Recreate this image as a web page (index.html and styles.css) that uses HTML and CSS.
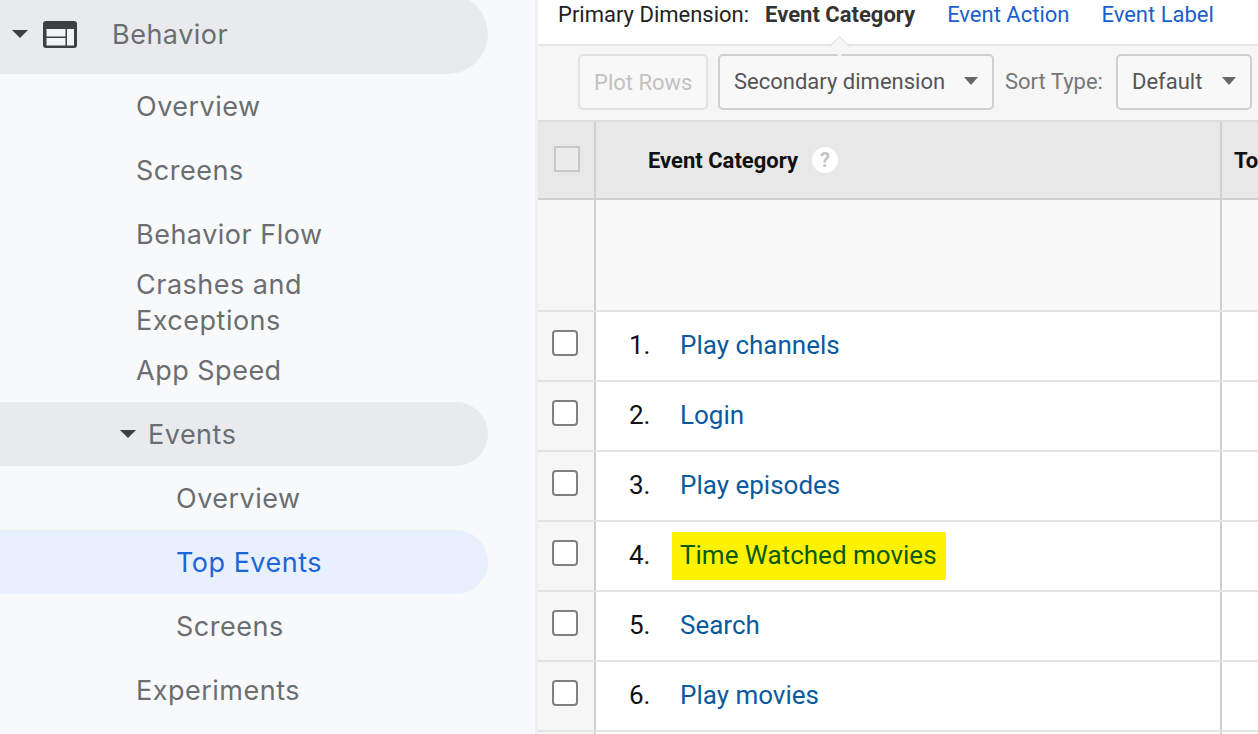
FILE: index.html
```html
<!DOCTYPE html>
<html lang="en">
<head>
    <meta charset="UTF-8">
    <meta name="viewport" content="width=device-width, initial-scale=1.0">
    <title>Top Events</title>
    <link rel="stylesheet" href="styles.css">
</head>
<body>
    <div class="page">
        <nav class="sidebar">
            <div class="nav-item nav-head">
                <span class="caret"></span>
                <svg class="nav-icon" width="34" height="27" viewBox="0 0 34 27">
                    <rect width="34" height="27" rx="3" fill="#3c4043"/>
                    <rect x="3.500" y="8" width="19" height="7.500" fill="#f1f3f4"/>
                    <rect x="3.500" y="17" width="19" height="7.500" fill="#f1f3f4"/>
                    <rect x="24" y="8" width="7" height="16.500" fill="#f1f3f4"/>
                </svg>
                <span>Behavior</span>
            </div>
            <div class="nav-item level-1">Overview</div>
            <div class="nav-item level-1">Screens</div>
            <div class="nav-item level-1">Behavior Flow</div>
            <div class="nav-item level-1 two-line">Crashes and<br>Exceptions</div>
            <div class="nav-item level-1">App Speed</div>
            <div class="nav-item nav-group">
                <span class="caret"></span>
                <span>Events</span>
            </div>
            <div class="nav-item level-2">Overview</div>
            <div class="nav-item level-2 active">Top Events</div>
            <div class="nav-item level-2">Screens</div>
            <div class="nav-item level-1">Experiments</div>
        </nav>

        <main class="content">
            <div class="dimensions">
                <span class="dim-label">Primary Dimension:</span>
                <span class="dim-current">Event Category</span>
                <a class="dim-link">Event Action</a>
                <a class="dim-link">Event Label</a>
            </div>

            <div class="toolbar">
                <button class="btn btn-disabled">Plot Rows</button>
                <button class="btn btn-secondary">Secondary dimension <span class="btn-caret"></span></button>
                <span class="sort-label">Sort Type:</span>
                <button class="btn btn-sort">Default <span class="btn-caret"></span></button>
            </div>

            <div class="row row-head">
                <div class="cell-check"><span class="checkbox checkbox-head"></span></div>
                <div class="cell-name">Event Category <span class="help">?</span></div>
                <div class="cell-total">Total Events</div>
            </div>
            <div class="row row-blank">
                <div class="cell-check"></div>
                <div class="cell-name"></div>
                <div class="cell-total"></div>
            </div>
            <div class="row">
                <div class="cell-check"><span class="checkbox"></span></div>
                <div class="cell-name"><span class="num">1.</span><a class="event-link">Play channels</a></div>
                <div class="cell-total"></div>
            </div>
            <div class="row">
                <div class="cell-check"><span class="checkbox"></span></div>
                <div class="cell-name"><span class="num">2.</span><a class="event-link">Login</a></div>
                <div class="cell-total"></div>
            </div>
            <div class="row">
                <div class="cell-check"><span class="checkbox"></span></div>
                <div class="cell-name"><span class="num">3.</span><a class="event-link">Play episodes</a></div>
                <div class="cell-total"></div>
            </div>
            <div class="row">
                <div class="cell-check"><span class="checkbox"></span></div>
                <div class="cell-name"><span class="num">4.</span><a class="event-link marked">Time Watched movies</a></div>
                <div class="cell-total"></div>
            </div>
            <div class="row">
                <div class="cell-check"><span class="checkbox"></span></div>
                <div class="cell-name"><span class="num">5.</span><a class="event-link">Search</a></div>
                <div class="cell-total"></div>
            </div>
            <div class="row">
                <div class="cell-check"><span class="checkbox"></span></div>
                <div class="cell-name"><span class="num">6.</span><a class="event-link">Play movies</a></div>
                <div class="cell-total"></div>
            </div>
            <div class="row">
                <div class="cell-check"></div>
                <div class="cell-name"></div>
                <div class="cell-total"></div>
            </div>
        </main>
    </div>
</body>
</html>
```

FILE: styles.css
```css
html, body {
    margin: 0;
    padding: 0;
    height: 100%;
    overflow: hidden;
    background-color: white;
}
.page {
    display: flex;
    width: 1258px;
    height: 734px;
    overflow: hidden;
    font-family: Roboto, Arial, sans-serif;
}

/* sidebar */
.sidebar {
    flex: 0 0 538px;
    height: 740px;
    margin-top: -6px;
    padding-right: 47px;
    box-sizing: border-box;
    background-color: #f8f9fb;
    border-right: 3px solid #eff0f2;
}
.nav-item {
    display: flex;
    align-items: center;
    height: 64px;
    font-family: Inter, Roboto, sans-serif;
    font-size: 27px;
    letter-spacing: 0.5px;
    color: #6b6e71;
}
.nav-head {
    height: 80px;
    background-color: #e8eaed;
    border-radius: 0 40px 40px 0;
    padding-left: 12px;
}
.nav-head .nav-icon {
    margin-left: 15px;
    margin-right: 35px;
}
.level-1 {
    padding-left: 136px;
}
.two-line {
    height: 72px;
    padding-top: 2px;
    box-sizing: border-box;
    line-height: 36px;
}
.level-2 {
    padding-left: 176px;
}
.nav-group {
    background-color: #e8eaed;
    border-radius: 0 32px 32px 0;
    padding-left: 120px;
}
.nav-group .caret {
    margin-right: 12px;
}
.active {
    background-color: #e8f0fd;
    border-radius: 0 32px 32px 0;
    color: #1a66d6;
}
.caret {
    width: 0;
    height: 0;
    border-left: 8px solid transparent;
    border-right: 8px solid transparent;
    border-top: 8px solid #3c4043;
}

/* primary dimension bar */
.content {
    flex: 1;
    min-width: 0;
}
.dimensions {
    position: relative;
    display: flex;
    align-items: center;
    height: 28px;
    padding: 0 0 16px 20px;
    border-bottom: 2px solid #e6e6e6;
    font-size: 22px;
    color: #222;
}
.dimensions::after {
    content: "";
    position: absolute;
    left: 294px;
    bottom: -2px;
    width: 14px;
    height: 14px;
    background-color: #f6f6f6;
    border-top: 1px solid #e0e0e0;
    border-left: 1px solid #e0e0e0;
    transform: translateY(8px) rotate(45deg);
}
.dim-current {
    margin-left: 16px;
    font-weight: 700;
    color: #333;
}
.dim-link {
    margin-left: 32px;
    color: #1a5fd0;
}

/* toolbar */
.toolbar {
    display: flex;
    align-items: center;
    height: 76px;
    padding: 0 0 2px 40px;
    background-color: #f6f6f6;
    box-sizing: border-box;
    border-bottom: 2px solid #dedede;
    font-size: 22px;
}
.btn {
    display: flex;
    align-items: center;
    height: 56px;
    padding: 0 14px 2px;
    background-color: #f8f8f8;
    border: 2px solid #cfcfcf;
    border-radius: 5px;
    box-sizing: border-box;
    font-family: inherit;
    font-size: 22px;
    white-space: nowrap;
    color: #555;
}
.btn-disabled {
    width: 130px;
    padding-bottom: 0;
    border-color: #e2e2e2;
    color: #c2c2c2;
}
.btn-secondary {
    width: 276px;
    margin-left: 10px;
}
.btn-sort {
    width: 136px;
    margin-left: 13px;
}
.btn-caret {
    width: 0;
    height: 0;
    margin-left: auto;
    border-left: 7px solid transparent;
    border-right: 7px solid transparent;
    border-top: 8px solid #666;
}
.sort-label {
    margin-left: 11px;
    padding-bottom: 2px;
    color: #777;
}

/* table */
.row {
    display: flex;
    height: 68px;
    border-bottom: 2px solid #e4e4e4;
}
.cell-check {
    display: flex;
    align-items: center;
    flex: 0 0 58px;
    padding-left: 14px;
    box-sizing: border-box;
    background-color: #f6f6f6;
    border-right: 2px solid #cfcfcf;
}
.cell-name {
    display: flex;
    align-items: center;
    width: 626px;
    box-sizing: border-box;
    border-right: 2px solid #cfcfcf;
    font-size: 26px;
}
.cell-total {
    flex: 1;
    padding-left: 12px;
    white-space: nowrap;
    overflow: hidden;
}
.row-head {
    height: 76px;
    background-color: #e8e8e8;
    border-bottom: 2px solid #cfcfcf;
}
.row-head .cell-check {
    background-color: #e8e8e8;
    padding-left: 16px;
}
.row-head .cell-name {
    padding-left: 52px;
    font-size: 22px;
    font-weight: 700;
    color: #111;
}
.row-head .cell-total {
    display: flex;
    align-items: center;
    font-size: 22px;
    font-weight: 700;
    color: #111;
}
.row-blank {
    height: 110px;
}
.row-blank .cell-name, .row-blank .cell-total {
    background-color: #f9f9f9;
}
.checkbox {
    display: block;
    width: 22px;
    height: 22px;
    margin-top: -6px;
    background-color: white;
    border: 2px solid #808080;
    border-radius: 4px;
}
.checkbox-head {
    margin-top: -2px;
    background-color: #ececec;
    border-color: #c8c8c8;
    border-radius: 0;
}
.help {
    display: flex;
    align-items: center;
    justify-content: center;
    width: 26px;
    height: 26px;
    margin-left: 14px;
    background-color: white;
    border-radius: 50%;
    font-size: 20px;
    color: #c4c4c4;
}
.num {
    width: 84px;
    padding: 0 0 2px 33px;
    box-sizing: border-box;
    color: #111;
}
.event-link {
    padding-bottom: 2px;
    color: #0b5a9e;
}
.marked {
    margin-left: -8px;
    padding: 0 9px 2px 8px;
    line-height: 46px;
    background-color: #fff200;
    color: #0a5a12;
}
```
